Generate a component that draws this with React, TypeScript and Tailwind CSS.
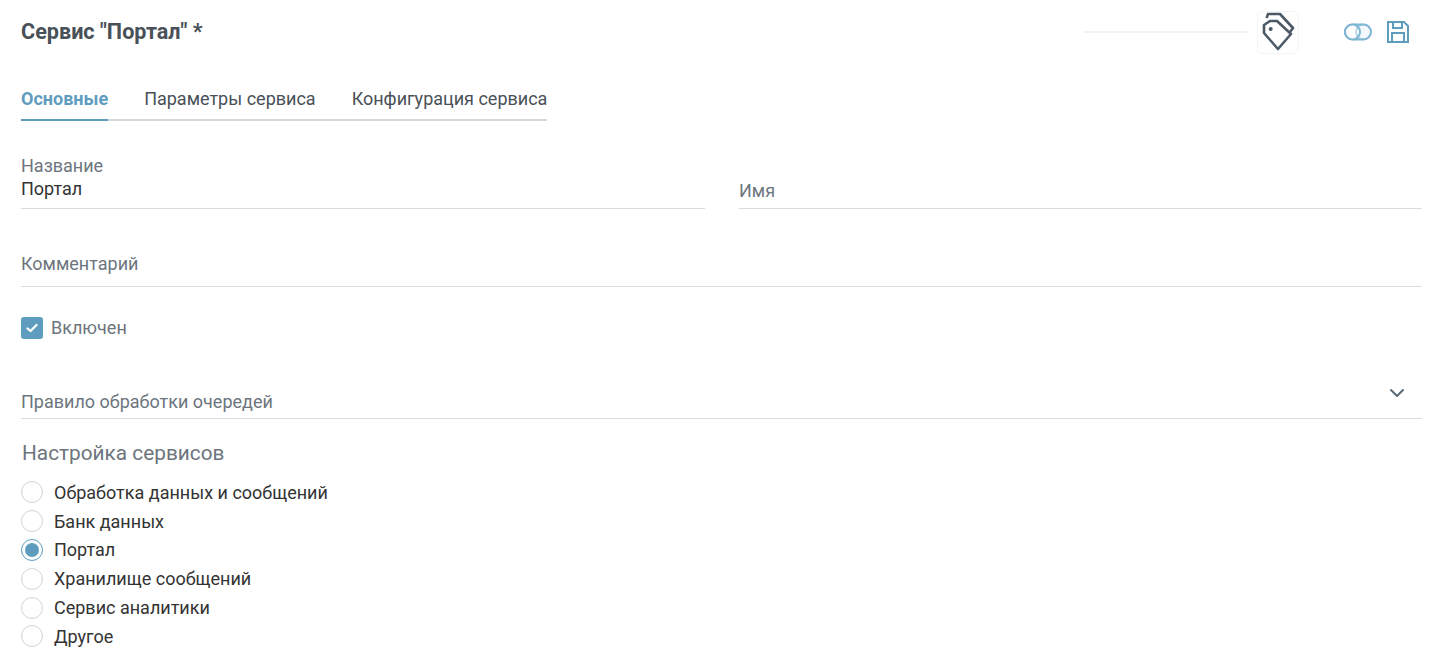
import { ChevronDown } from 'lucide-react';

const services = [
  { label: 'Обработка данных и сообщений', checked: false },
  { label: 'Банк данных', checked: false },
  { label: 'Портал', checked: true },
  { label: 'Хранилище сообщений', checked: false },
  { label: 'Сервис аналитики', checked: false },
  { label: 'Другое', checked: false },
];

function Radio({ label, checked }: { label: string; checked: boolean }) {
  return (
    <div className="flex h-[28.8px] items-center">
      <span
        className={`flex h-[22px] w-[22px] items-center justify-center rounded-full border bg-white ${
          checked ? 'border-[#5f9dbf]' : 'border-[#d4d4d4]'
        }`}
      >
        {checked && <span className="h-[14px] w-[14px] rounded-full bg-[#5f9dbf]" />}
      </span>
      <span className="ml-[11px] text-[18px] text-[#333]">{label}</span>
    </div>
  );
}

function TagsIcon() {
  return (
    <svg width="36" height="40" viewBox="0 0 36 40" fill="none" stroke="#4d5a66" strokeWidth="2.6" strokeLinejoin="round" strokeLinecap="round">
      <path d="M4 13 L10 9 H17 L31 22 L18 37 L4 21 Z" />
      <circle cx="10.7" cy="17" r="2" fill="#4d5a66" stroke="none" />
      <path d="M7 5 L8 2 H20 L33 16 L30 20" />
    </svg>
  );
}

function ToggleIcon() {
  return (
    <svg width="28" height="18" viewBox="0 0 28 18" fill="none" stroke="#7eb6d4" strokeWidth="2">
      <rect x="1" y="1.5" width="26" height="15" rx="7.5" fill="#f2f8fb" />
      <circle cx="8.5" cy="9" r="7.5" fill="#fff" />
      <path d="M19.5 1.5 A7.5 7.5 0 0 0 19.5 16.5" strokeOpacity="0.5" />
    </svg>
  );
}

function SaveIcon() {
  return (
    <svg width="24" height="24" viewBox="0 0 24 24" fill="none" stroke="#5f9dbf" strokeWidth="2">
      <path d="M2 2 H18 L22 6 V22 H2 Z" />
      <path d="M7 2 V8 H16 V2" />
      <path d="M6 22 V13 H18 V22" />
    </svg>
  );
}

export default function App() {
  return (
    <div className="h-[660px] w-[1438px] overflow-hidden bg-white pl-[21px] pr-[16px] font-['Roboto',sans-serif]">
      {/* Header */}
      <div className="flex h-[64px] items-center justify-between">
        <h1 className="text-[21.6px] font-bold text-[#495057]">Сервис "Портал" *</h1>
        <div className="flex items-center pr-[12px]">
          <div className="h-[2px] w-[164px] bg-[#f3f3f3]" />
          <div className="ml-[9px] flex h-[43px] w-[42px] items-center justify-center rounded-md border border-[#f5f5f5]">
            <TagsIcon />
          </div>
          <div className="ml-[45px]">
            <ToggleIcon />
          </div>
          <div className="ml-[14px]">
            <SaveIcon />
          </div>
        </div>
      </div>

      {/* Tabs */}
      <div className="mt-[16px] flex h-[41px] w-[526px] gap-9 whitespace-nowrap border-b-2 border-[#d4d7da] text-[18px]">
        <div className="-mb-[2px] border-b-2 border-[#5f9dbf] pt-[5px] font-bold text-[#5f9dbf]">Основные</div>
        <div className="pt-[5px] text-[#495057]">Параметры сервиса</div>
        <div className="pt-[5px] text-[#495057]">Конфигурация сервиса</div>
      </div>

      {/* Fields */}
      <div className="mt-[32px] grid grid-cols-[684px_683px] gap-x-[34px]">
        <div className="h-[56px] border-b border-[#dcdcdc] pt-[1px]">
          <div className="text-[18px] leading-[23px] text-[#6c757d]">Название</div>
          <div className="text-[18px] leading-[24px] text-[#333]">Портал</div>
        </div>
        <div className="flex h-[56px] items-end border-b border-[#dcdcdc] pb-[4px] text-[18px] text-[#6c757d]">Имя</div>
      </div>
      <div className="mt-[26px] flex h-[52px] items-end border-b border-[#dcdcdc] pb-[9px] text-[18px] text-[#6c757d]">
        Комментарий
      </div>

      <div className="mt-[30px] flex h-[22px] items-center leading-none">
        <span className="flex h-[22px] w-[22px] items-center justify-center rounded-[3px] bg-[#5f9dbf]">
          <svg width="12" height="10" viewBox="0 0 12 10" fill="none" stroke="#fff" strokeWidth="2.2" strokeLinecap="round" strokeLinejoin="round">
            <path d="M1.5 5.5 L4.5 8 L10.5 2" />
          </svg>
        </span>
        <span className="ml-[8px] text-[18px] text-[#6c757d]">Включен</span>
      </div>

      <div className="relative mt-[31px] flex h-[49px] items-end border-b border-[#dcdcdc] pb-[3px] text-[18px] text-[#6c757d]">
        Правило обработки очередей
        <ChevronDown className="absolute right-[13px] top-[11px] h-6 w-6 text-[#5b6b78]" strokeWidth={2} />
      </div>

      <h2 className="mt-[20px] pl-[1px] text-[20.8px] leading-7 text-[#6c757d]">Настройка сервисов</h2>
      <div className="mt-[11px]">
        {services.map((s) => (
          <Radio key={s.label} label={s.label} checked={s.checked} />
        ))}
      </div>
    </div>
  );
}
